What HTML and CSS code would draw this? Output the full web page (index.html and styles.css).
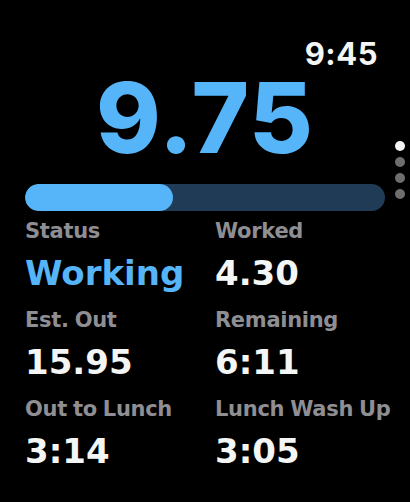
FILE: index.html
```html
<!DOCTYPE html>
<html lang="en">
<head>
<meta charset="utf-8">
<title>Timesheet</title>
<link rel="stylesheet" href="styles.css">
</head>
<body>
<main class="screen">
  <div class="clock">9:45</div>
  <div class="total">9.75</div>
  <div class="progress"><div class="progress-fill" style="width: 41%"></div></div>
  <section class="stats">
    <div class="stat">
      <div class="stat-label">Status</div>
      <div class="stat-value stat-value--accent">Working</div>
    </div>
    <div class="stat">
      <div class="stat-label">Worked</div>
      <div class="stat-value">4.30</div>
    </div>
    <div class="stat">
      <div class="stat-label">Est. Out</div>
      <div class="stat-value">15.95</div>
    </div>
    <div class="stat">
      <div class="stat-label">Remaining</div>
      <div class="stat-value">6:11</div>
    </div>
    <div class="stat">
      <div class="stat-label">Out to Lunch</div>
      <div class="stat-value">3:14</div>
    </div>
    <div class="stat">
      <div class="stat-label">Lunch Wash Up</div>
      <div class="stat-value">3:05</div>
    </div>
  </section>
  <nav class="pager" aria-label="Pages">
    <span class="pager-dot pager-dot--active"></span>
    <span class="pager-dot"></span>
    <span class="pager-dot"></span>
    <span class="pager-dot"></span>
  </nav>
</main>
</body>
</html>
```
FILE: styles.css
```css
* {
  box-sizing: border-box;
}

html, body {
  margin: 0;
  background: #000;
}

body {
  font-family: Inter, "Noto Sans", sans-serif;
  color: #f4f5f5;
}

.screen {
  position: relative;
  width: 410px;
  height: 502px;
  padding: 39px 25px 0 25px;
}

.clock {
  text-align: right;
  padding-right: 7px;
  font-size: 31px;
  line-height: 30px;
  font-weight: 700;
  letter-spacing: 0.5px;
  color: #f4f5f5;
}

.total {
  text-align: center;
  font-size: 98px;
  line-height: 98px;
  font-weight: 800;
  color: #56b4f8;
  letter-spacing: 1px;
}

.progress {
  margin-top: 17px;
  height: 27px;
  border-radius: 14px;
  background: #1f3b56;
  overflow: hidden;
}

.progress-fill {
  height: 100%;
  border-radius: 14px;
  background: #56b4f8;
}

.stats {
  margin-top: 8px;
  display: grid;
  grid-template-columns: 190px 1fr;
  row-gap: 15px;
  font-family: "DejaVu Sans", Inter, sans-serif;
}

.stat {
  display: flex;
  flex-direction: column;
  gap: 10px;
  white-space: nowrap;
}

.stat-label {
  font-size: 21px;
  line-height: 24px;
  font-weight: 700;
  letter-spacing: -0.3px;
  word-spacing: -1px;
  color: #8e8e93;
}

.stat-value {
  font-size: 34px;
  line-height: 40px;
  font-weight: 700;
  color: #f4f5f5;
}

.stat-value--accent {
  color: #56b4f8;
}

.pager {
  position: absolute;
  top: 141px;
  right: 5px;
  display: flex;
  flex-direction: column;
  gap: 6px;
}

.pager-dot {
  width: 10px;
  height: 10px;
  border-radius: 50%;
  background: #6e6e6e;
}

.pager-dot--active {
  background: #f4f4f4;
}
```
